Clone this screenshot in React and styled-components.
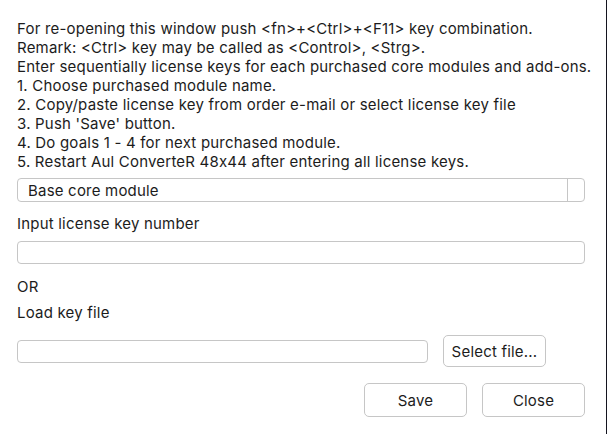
import styled, { createGlobalStyle } from "styled-components"

const GlobalStyle = createGlobalStyle`
    html, body {
        margin: 0;
        padding: 0;
        background: #ffffff;
    }
    body {
        font-family: Inter, "Liberation Sans", Arial, sans-serif;
        font-feature-settings: "calt" 0;
        color: #1c1c1c;
    }
`

const Window = styled.div`
    width: 607px;
    height: 434px;
    box-sizing: border-box;
    border-right: 1px solid #14141f;
    background: #ffffff;
    padding: 19px 21px 0 17px;
    display: flex;
    flex-direction: column;
    font-size: 15px;
    line-height: 19px;
    letter-spacing: 0.2px;
`

const Instructions = styled.div`
    display: flex;
    flex-direction: column;
    white-space: nowrap;
`

const Field = styled.div`
    box-sizing: border-box;
    height: ${p => p.$height || 23}px;
    width: ${p => (p.$width ? `${p.$width}px` : "100%")};
    border: 1px solid #c6c6c6;
    border-radius: 4px;
    background: #ffffff;
    display: flex;
    align-items: stretch;
    margin-top: ${p => p.$top || 0}px;
`

const SelectValue = styled.div`
    flex: 1;
    padding-left: 10px;
    display: flex;
    align-items: center;
`

const SelectHandle = styled.div`
    width: 16px;
    border-left: 1px solid #c6c6c6;
`

const Label = styled.div`
    margin-top: ${p => p.$top || 0}px;
`

const FileRow = styled.div`
    display: flex;
    align-items: center;
    gap: 15px;
    margin-top: 13px;
`

const Actions = styled.div`
    display: flex;
    justify-content: flex-end;
    gap: 15px;
    margin-top: 16px;
`

const Button = styled.button`
    box-sizing: border-box;
    width: 103px;
    height: ${p => p.$height || 34}px;
    border: 1px solid #c6c6c6;
    border-radius: 5px;
    background: #ffffff;
    font-family: Inter, "Liberation Sans", Arial, sans-serif;
    font-feature-settings: "calt" 0;
    font-size: 15px;
    letter-spacing: 0.2px;
    color: #1c1c1c;
    padding: 0;
    cursor: pointer;
`

const lines = [
    "For re-opening this window push <fn>+<Ctrl>+<F11> key combination.",
    "Remark: <Ctrl> key may be called as <Control>, <Strg>.",
    "Enter sequentially license keys for each purchased core modules and add-ons.",
    "1. Choose purchased module name.",
    "2. Copy/paste license key from order e-mail or select license key file",
    "3. Push 'Save' button.",
    "4. Do goals 1 - 4 for next purchased module.",
    "5. Restart Aul ConverteR 48x44 after entering all license keys.",
]

export default function App() {
    return <>
        <GlobalStyle />
        <Window>
            <Instructions>
                {lines.map(line => <span key={line}>{line}</span>)}
            </Instructions>
            <Field $height={24} $top={7}>
                <SelectValue>Base core module</SelectValue>
                <SelectHandle />
            </Field>
            <Label $top={12}>Input license key number</Label>
            <Field $top={8} />
            <Label $top={13}>OR</Label>
            <Label $top={7}>Load key file</Label>
            <FileRow>
                <Field $width={411} />
                <Button $height={32}>Select file...</Button>
            </FileRow>
            <Actions>
                <Button>Save</Button>
                <Button>Close</Button>
            </Actions>
        </Window>
    </>
}
